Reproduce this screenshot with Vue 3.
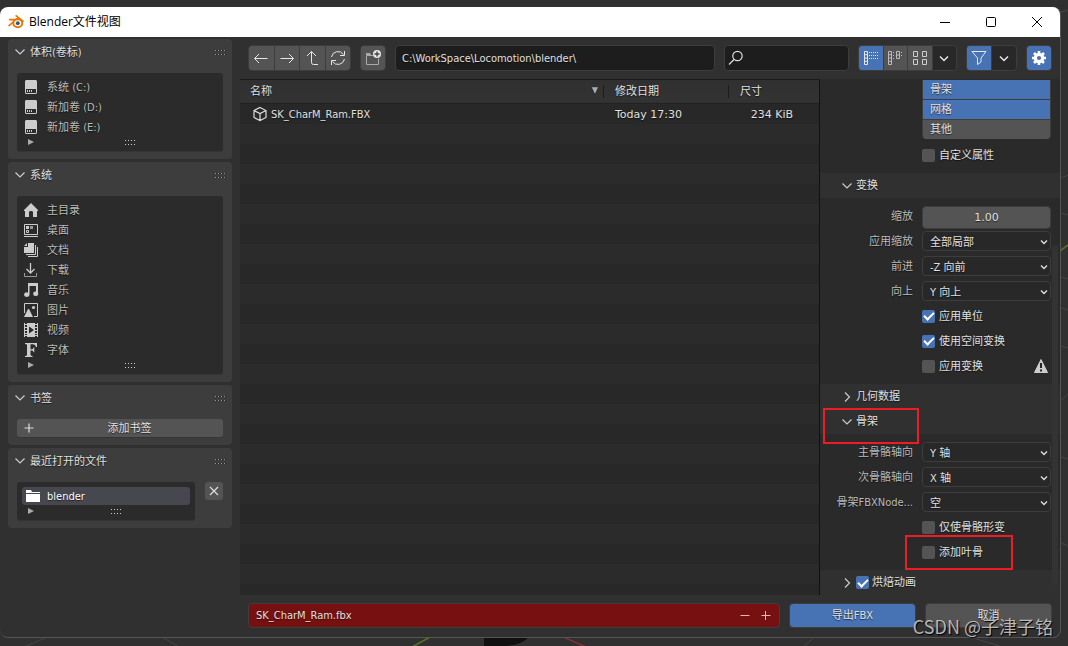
<script setup>
import { ref } from 'vue'

const volumes = ['系统 (C:)', '新加卷 (D:)', '新加卷 (E:)']
const places = [
  { icon: 'home', label: '主目录' },
  { icon: 'desktop', label: '桌面' },
  { icon: 'docs', label: '文档' },
  { icon: 'download', label: '下载' },
  { icon: 'music', label: '音乐' },
  { icon: 'image', label: '图片' },
  { icon: 'video', label: '视频' },
  { icon: 'font', label: '字体' },
]
const types = [
  { label: '骨架', on: true },
  { label: '网格', on: true },
  { label: '其他', on: false },
]
const transformSelects = [
  { id: 'apply-scale', label: '应用缩放', value: '全部局部' },
  { id: 'forward', label: '前进', value: '-Z 向前' },
  { id: 'up', label: '向上', value: 'Y 向上' },
]
const armatureSelects = [
  { id: 'primary-bone', label: '主骨骼轴向', value: 'Y 轴' },
  { id: 'secondary-bone', label: '次骨骼轴向', value: 'X 轴' },
  { id: 'node-type', label: '骨架FBXNode...', value: '空' },
]
const customProps = ref(false)
const applyUnit = ref(true)
const spaceTransform = ref(true)
const applyTransform = ref(false)
const deformOnly = ref(false)
const leafBones = ref(false)
const bake = ref(true)
const path = ref('C:\\WorkSpace\\Locomotion\\blender\\')
const search = ref('')
const scale = ref('1.00')
const filename = ref('SK_CharM_Ram.fbx')
</script>

<template>
  <div class="desktop">
    <svg class="viewport" viewBox="0 0 1068 646" preserveAspectRatio="none" aria-hidden="true">
      <g fill="none" stroke="#444" stroke-width="1">
        <path d="M26 646 50 636M160 636 178 646M804 646 816 636M966 636 1000 646M1061 12 1068 10M1061 178 1068 175M1061 213 1068 215M1061 277 1068 279M1061 308 1068 310M1061 346 1068 348M1061 400 1068 394M1061 457 1068 459M1061 543 1068 546" />
      </g>
      <path d="M412 647 432 636M1060 251 1068 245" stroke="#55722a" stroke-width="1.6" />
      <path d="M561 636 586 647" stroke="#7d3039" stroke-width="1.6" />
      <path d="M484 636H530Q522 645 506 646H484Z" fill="#101010" />
    </svg>

    <main class="window">
      <header class="titlebar">
        <svg class="logo" width="16" height="14" viewBox="0 0 16 14" aria-hidden="true">
          <path d="M8.2.8 15 6.2M1.6 4.6H9M1 10.6 9.6 3.4" stroke="#ea7600" stroke-width="1.6" stroke-linecap="round" fill="none" />
          <ellipse cx="9.8" cy="8.3" rx="4.5" ry="4" fill="#fff" stroke="#ea7600" stroke-width="1.9" />
          <circle cx="9.8" cy="8.2" r="1.9" fill="#265787" />
        </svg>
        <h1>Blender文件视图</h1>
        <div class="caption">
          <button aria-label="最小化"><svg width="12" height="12" viewBox="0 0 12 12"><path d="M1 6.5H11" /></svg></button>
          <button aria-label="最大化"><svg width="12" height="12" viewBox="0 0 12 12"><rect x="1.5" y="1.5" width="9" height="9" rx="1" /></svg></button>
          <button aria-label="关闭"><svg width="12" height="12" viewBox="0 0 12 12"><path d="M1 1 11 11M11 1 1 11" /></svg></button>
        </div>
      </header>

      <div class="body">
        <aside class="sidebar">
          <section class="panel">
            <h2><svg class="chev" width="12" height="12" viewBox="0 0 12 12"><path d="M1.5 3.5 6 8 10.5 3.5" /></svg>体积(卷标)<i class="grip dark"></i></h2>
            <div class="box">
              <button v-for="v in volumes" :key="v" class="place">
                <svg width="16" height="16" viewBox="0 0 16 16"><path fill="#ccc" fill-rule="evenodd" d="M3 1H13L14 2V14L13 15H3L2 14V2ZM3 10V14H13V10ZM4 11H5V13H4ZM6 11H7V13H6ZM8 11H9V13H8Z" /></svg>
                {{ v }}
              </button>
              <div class="boxfoot"><span class="tri"></span><i class="grip"></i></div>
            </div>
          </section>

          <section class="panel">
            <h2><svg class="chev" width="12" height="12" viewBox="0 0 12 12"><path d="M1.5 3.5 6 8 10.5 3.5" /></svg>系统<i class="grip dark"></i></h2>
            <div class="box">
              <button v-for="p in places" :key="p.label" class="place">
                <svg width="16" height="16" viewBox="0 0 16 16">
                  <path v-if="p.icon === 'home'" fill="#ccc" d="M8 1 15 8V9H14V15H10V10Q10 9 8 9T6 10V15H2V9H1V8Z" />
                  <g v-else-if="p.icon === 'desktop'"><path fill="none" stroke="#ccc" d="M1.5 2.5H14.5V12.5H1.5ZM1 14.5H15M3.500 8.500H5.500V10.500H3.500Z" /><path fill="#ccc" d="M3 4H6V7H3Z" /><path fill="#999" d="M7 4H10V7H7Z" /></g>
                  <g v-else-if="p.icon === 'docs'"><path fill="#ccc" d="M5 1H11V11H1V5H5ZM4 1V4H1Z" /><path fill="none" stroke="#ccc" d="M12.500 3V12.500H3M14.500 5V14.500H5" /></g>
                  <g v-else-if="p.icon === 'download'" fill="none"><path stroke="#ccc" stroke-width="1.3" d="M7.500 1V11M3.500 7 7.500 11 11.500 7" /><path stroke="#999" d="M1.500 11V14.500H13.500V11" /></g>
                  <path v-else-if="p.icon === 'music'" fill="#ccc" d="M5 1H15V11A2.500 2.200 0 1 1 13 9.600V4H6.500V12.500A2.700 2.200 0 1 1 5 10.700Z" />
                  <g v-else-if="p.icon === 'image'"><path fill="none" stroke="#ccc" d="M1.500 11V1.500H14.500V14.500H11" /><path fill="#ccc" d="M1 15 5 7H6L10 15Z" /><circle cx="10.500" cy="5.500" r="1.600" fill="#ccc" /></g>
                  <path v-else-if="p.icon === 'video'" fill="#ccc" fill-rule="evenodd" d="M1 1H2V2H4V1H12V2H14V1H15V15H14V14H12V15H4V14H2V15H1ZM2 3V5H4V3ZM2 6V8H4V6ZM2 9V11H4V9ZM2 12V13H4V12ZM12 3V5H14V3ZM12 6V8H14V6ZM12 9V11H14V9ZM12 12V13H14V12ZM6 4.500V11.500L11 8Z" />
                  <path v-else fill="#ccc" d="M2 1H14V5H13Q12.500 2.300 10 2.300H7.500V7.300H9Q10.500 7 10.500 5.500H11.300V10.300H10.500Q10.500 8.700 9 8.500H7.500V13Q7.600 14 9.500 14V15H2V14Q4 14 4 13V3Q4 2 2 2Z" />
                </svg>
                {{ p.label }}
              </button>
              <div class="boxfoot"><span class="tri"></span><i class="grip"></i></div>
            </div>
          </section>

          <section class="panel">
            <h2><svg class="chev" width="12" height="12" viewBox="0 0 12 12"><path d="M1.5 3.5 6 8 10.5 3.5" /></svg>书签<i class="grip dark"></i></h2>
            <button class="add">
              <svg width="10" height="10" viewBox="0 0 10 10"><path d="M5 .5V9.500M.5 5H9.500" stroke="#ddd" stroke-width="1.200" /></svg>
              <span>添加书签</span>
            </button>
          </section>

          <section class="panel">
            <h2><svg class="chev" width="12" height="12" viewBox="0 0 12 12"><path d="M1.5 3.5 6 8 10.5 3.5" /></svg>最近打开的文件<i class="grip dark"></i></h2>
            <div class="recent">
              <div class="box">
                <button class="place active">
                  <svg width="16" height="16" viewBox="0 0 16 16"><path fill="#fff" d="M1 2H6L7 4H15V5H1ZM1 6H15V14H1Z" /></svg>
                  blender
                </button>
                <div class="boxfoot"><span class="tri"></span><i class="grip"></i></div>
              </div>
              <button class="clear" aria-label="清除"><svg width="10" height="10" viewBox="0 0 10 10"><path d="M1 1 9 9M9 1 1 9" stroke="#ddd" stroke-width="1.200" /></svg></button>
            </div>
          </section>
        </aside>

        <div class="work">
          <nav class="toolbar">
            <div class="group nav">
              <button aria-label="后退"><svg width="16" height="16" viewBox="0 0 16 16"><path d="M14.500 8.500H1.500M6 4 1.500 8.500 6 13" /></svg></button>
              <button aria-label="前进"><svg width="16" height="16" viewBox="0 0 16 16"><path d="M1.500 8.500H14.500M10 4 14.500 8.500 10 13" /></svg></button>
              <button aria-label="上级"><svg width="16" height="16" viewBox="0 0 16 16"><path d="M3 6 7.500 1.500 12 6M7.500 1.500V12.500Q7.500 14.500 9.500 14.500H14" /></svg></button>
              <button aria-label="刷新"><svg width="16" height="16" viewBox="0 0 16 16"><path d="M1.500 7A6.600 6.600 0 0 1 13.500 4.500M14.500 1V5.500H10M14.500 9A6.600 6.600 0 0 1 2.500 11.500M1.500 15V10.500H6" /></svg></button>
            </div>
            <div class="group single">
              <button aria-label="新建文件夹"><svg width="16" height="16" viewBox="0 0 16 16"><path d="M1.500 14.500V5.500H8M1.500 14.500H13.500V8.500" stroke="#aaa" /><path d="M1 3H5L6 5H1Z" fill="#aaa" stroke="none" /><circle cx="12" cy="4" r="4" fill="#e6e6e6" stroke="none" /><path d="M12 1.500V6.500M9.500 4H14.500" stroke="#444" stroke-width="1.400" /></svg></button>
            </div>
            <input v-model="path" class="field path" aria-label="路径" />
            <label class="field search">
              <svg width="16" height="16" viewBox="0 0 16 16"><circle cx="9.500" cy="6" r="4.700" /><path d="M6 9.500 1 14.500" /></svg>
              <input v-model="search" aria-label="搜索" />
            </label>
            <div class="group four">
              <button class="on" aria-label="垂直列表"><svg width="16" height="16" viewBox="0 0 16 16"><path d="M1.500 1.500H4.500V14.500H1.500ZM1.500 4.700H4.500M1.500 8H4.500M1.500 11.300H4.500" /><path stroke-dasharray="1 1" d="M6 2.500H16M6 5.500H16M6 8.500H16" /></svg></button>
              <button aria-label="水平列表"><svg width="16" height="16" viewBox="0 0 16 16"><path stroke="#bbb" d="M1.500 1.500H4.500V14.500H1.500ZM1.500 4.700H4.500M1.500 8H4.500M1.500 11.300H4.500M9.500 1.500H12.500V8.500H9.500ZM9.500 5H12.500" /><path stroke="#bbb" stroke-dasharray="1 1" d="M6 2.500H8M6 5.500H8M6 8.500H8M14 2.500H16M14 5.500H16" /></svg></button>
              <button aria-label="缩略图"><svg width="16" height="16" viewBox="0 0 16 16"><path stroke="#ccc" d="M1.500 1.500H5.500V6.500H1.500ZM10.500 1.500H14.500V6.500H10.500ZM1.500 9.500H5.500V14.500H1.500ZM10.500 9.500H14.500V14.500H10.500Z" /></svg></button>
              <button class="drop" aria-label="显示设置"><svg width="10" height="10" viewBox="0 0 10 10"><path d="M1 3.500 5 7.500 9 3.500" stroke-width="1.500" /></svg></button>
            </div>
            <div class="group two">
              <button class="on" aria-label="过滤"><svg width="16" height="16" viewBox="0 0 16 16"><path d="M1 1.500H15L10 8V12L6.500 14.500V8Z" /></svg></button>
              <button class="drop" aria-label="过滤设置"><svg width="10" height="10" viewBox="0 0 10 10"><path d="M1 3.500 5 7.500 9 3.500" stroke-width="1.500" /></svg></button>
            </div>
            <div class="group single">
              <button class="on" aria-label="选项"><svg width="16" height="16" viewBox="0 0 16 16"><circle cx="8" cy="8" r="3.700" stroke="#fff" stroke-width="3.200" /><path d="M8 1V4M8 12V15M1 8H4M12 8H15M3 3 5 5M11 11 13 13M13 3 11 5M5 11 3 13" stroke="#fff" stroke-width="2.600" /></svg></button>
            </div>
          </nav>

          <div class="content">
            <div class="files">
              <table>
                <thead>
                  <tr><th class="name">名称<span class="sort">▼</span></th><th class="date">修改日期</th><th class="size">尺寸</th></tr>
                </thead>
                <tbody>
                  <tr>
                    <td class="name"><svg width="16" height="16" viewBox="0 0 16 16"><path fill="none" stroke="#ddd" stroke-width="1.200" d="M8 1.500 14 4.500V11.500L8 14.500 2 11.500V4.500ZM2 4.500 8 7.500 14 4.500M8 7.500V14.500" /></svg>SK_CharM_Ram.FBX</td>
                    <td class="date">Today 17:30</td>
                    <td class="size">234 KiB</td>
                  </tr>
                </tbody>
              </table>
            </div>

            <form class="options" @submit.prevent>
              <div class="group-top">
                <div class="types">
                  <button v-for="t in types" :key="t.label" type="button" :class="{ on: t.on }" :aria-pressed="t.on">{{ t.label }}</button>
                </div>
                <label class="check"><input v-model="customProps" type="checkbox" />自定义属性</label>
              </div>

              <h3><svg class="chev" width="12" height="12" viewBox="0 0 12 12"><path d="M1.5 3.5 6 8 10.5 3.5" /></svg>变换</h3>
              <div class="fields">
                <div class="row"><label for="scale">缩放</label><input id="scale" v-model="scale" class="number" /></div>
                <div v-for="s in transformSelects" :key="s.id" class="row">
                  <label :for="s.id">{{ s.label }}</label>
                  <div class="select"><select :id="s.id"><option>{{ s.value }}</option></select><svg width="8" height="8" viewBox="0 0 8 8"><path d="M1 2.500 4 5.500 7 2.500" /></svg></div>
                </div>
                <label class="check"><input v-model="applyUnit" type="checkbox" />应用单位</label>
                <label class="check"><input v-model="spaceTransform" type="checkbox" />使用空间变换</label>
                <div class="warnrow">
                  <label class="check"><input v-model="applyTransform" type="checkbox" />应用变换</label>
                  <svg width="16" height="16" viewBox="0 0 16 16" role="img" aria-label="警告"><path fill="#ccc" stroke="#ccc" stroke-linejoin="round" d="M8 1.500 14.500 14.500H1.500Z" /><path d="M8 5V10M8 11.500V13.500" stroke="#222" stroke-width="2" /></svg>
                </div>
              </div>

              <h3><svg class="chev" width="12" height="12" viewBox="0 0 12 12"><path d="M4 1.500 8.500 6 4 10.500" /></svg>几何数据</h3>
              <h3><svg class="chev" width="12" height="12" viewBox="0 0 12 12"><path d="M1.5 3.5 6 8 10.5 3.5" /></svg>骨架<i class="mark wide"></i></h3>
              <div class="fields">
                <div v-for="s in armatureSelects" :key="s.id" class="row">
                  <label :for="s.id">{{ s.label }}</label>
                  <div class="select"><select :id="s.id"><option>{{ s.value }}</option></select><svg width="8" height="8" viewBox="0 0 8 8"><path d="M1 2.500 4 5.500 7 2.500" /></svg></div>
                </div>
                <label class="check"><input v-model="deformOnly" type="checkbox" />仅使骨骼形变</label>
                <label class="check"><input v-model="leafBones" type="checkbox" />添加叶骨<i class="mark leaf"></i></label>
              </div>
              <h3><svg class="chev" width="12" height="12" viewBox="0 0 12 12"><path d="M4 1.500 8.500 6 4 10.500" /></svg><label class="check inline"><input v-model="bake" type="checkbox" />烘焙动画</label></h3>
              <i class="thumb"></i>
            </form>
          </div>

          <footer class="footer">
            <div class="filename">
              <input v-model="filename" aria-label="文件名" />
              <button aria-label="减少"><svg width="10" height="10" viewBox="0 0 10 10"><path d="M.5 4.500H9.500" stroke="#dbb" /></svg></button>
              <button aria-label="增加"><svg width="10" height="10" viewBox="0 0 10 10"><path d="M.5 4.500H9.500M4.500 0V9" stroke="#dbb" /></svg></button>
            </div>
            <button class="primary">导出FBX</button>
            <button>取消</button>
          </footer>
        </div>
      </div>
    </main>
    <p class="watermark">CSDN @子津子铭</p>
  </div>
</template>

<style>
body { margin: 0; }
</style>

<style scoped>
* { box-sizing: border-box; }
.desktop {
  position: relative;
  display: flex;
  min-height: 100vh;
  padding: 7px 7px 8px 0;
  background: #303030;
  font: 11px/21px "DejaVu Sans Condensed", "Noto Sans CJK SC", sans-serif;
  color: #e0e0e0;
  overflow: hidden;
}
.viewport { position: absolute; inset: 0; width: 100%; height: 100%; }
button, input, select { font: inherit; color: inherit; border: 0; padding: 0; margin: 0; text-shadow: inherit; }
button { display: flex; align-items: center; justify-content: center; cursor: pointer; }
svg { flex: none; display: block; }
h1, h2, h3, p { margin: 0; font-weight: 400; font-size: inherit; }
.window {
  position: relative;
  flex: 1;
  display: flex;
  flex-direction: column;
  min-width: 0;
  border: solid #555;
  border-width: 0 1px 1px 0;
  border-radius: 8px;
  background: #303030;
  overflow: hidden;
}
.titlebar { display: flex; align-items: center; height: 30px; padding-left: 8px; background: #fff; color: #000; }
.titlebar h1 { flex: 1; margin-left: 5px; font: 12px/20px "Open Sans", "Noto Sans CJK SC", sans-serif; }
.caption { display: flex; }
.caption button { width: 46px; height: 30px; background: none; }
.caption svg { fill: none; stroke: #000; }
.body { flex: 1; display: flex; min-height: 0; text-shadow: 0 1px 1px rgba(0, 0, 0, .6); }

.sidebar { width: 240px; flex: none; padding: 2px 8px; display: flex; flex-direction: column; gap: 3px; }
.panel { padding: 0 9px 8px; border-radius: 4px; background: #3d3d3d; }
.panel h2 { display: flex; align-items: center; height: 26px; margin: 0 -3px 8px; gap: 4px; }
.chev { fill: none; stroke: #ccc; stroke-width: 1.200; }
.grip {
  width: 11px;
  height: 5px;
  background: repeating-linear-gradient(90deg, #ccc 0 1px, transparent 1px 3px);
  -webkit-mask: linear-gradient(#000 0 1px, transparent 1px 4px, #000 4px 5px);
  mask: linear-gradient(#000 0 1px, transparent 1px 4px, #000 4px 5px);
}
.grip.dark { margin-left: auto; background: repeating-linear-gradient(90deg, #999 0 1px, #222 1px 2px, transparent 2px 3px); }
.box { padding: 4px 5px; border-radius: 3px; background: #2b2b2b; box-shadow: 0 1px #353535; }
.place { width: 100%; height: 20px; justify-content: flex-start; gap: 8px; background: none; color: #bbb; }
.place svg { margin-left: 1px; }
.place.active { height: 18px; margin-top: 1px; margin-bottom: 1px; padding-left: 2px; border-radius: 3px; background: #47474f; color: #fff; }
.box .place.active { gap: 6px; }
.boxfoot { position: relative; display: flex; align-items: center; justify-content: center; height: 10px; padding-left: 20px; }
.boxfoot .grip { margin-left: 0; }
.tri { position: absolute; left: 6px; top: 2px; border: solid transparent; border-width: 3px 0 3px 6px; border-left-color: #aaa; }
.add { position: relative; width: 100%; height: 18px; border-radius: 3px; background: #545454; box-shadow: 0 1px #353535; }
.add svg { position: absolute; left: 7px; }
.add span { padding-left: 19px; }
.recent { display: flex; align-items: flex-start; gap: 10px; }
.recent .box { flex: 1; }
.clear { width: 18px; height: 18px; border-radius: 3px; background: #545454; }

.work { flex: 1; min-width: 0; display: flex; flex-direction: column; }
.toolbar { display: flex; gap: 9px; height: 42px; padding: 8px 8px 8px 8px; }
.group { display: flex; gap: 1px; border: 1px solid #3d3d3d; border-radius: 4px; background: #3d3d3d; overflow: hidden; flex: none; }
.group button { flex: 1; background: #545454; }
.group svg { fill: none; stroke: #e6e6e6; }
.group .on { background: #4772b3; }
.group .drop { background: #282828; }
.nav { width: 103px; }
.single { width: 26px; }
.four { width: 99px; }
.two { width: 51px; }
.field { min-width: 0; border: 1px solid #3d3d3d; border-radius: 4px; background: #1d1d1d; }
.path { flex: 1; padding: 0 6px; }
.search { display: flex; align-items: center; width: 125px; padding-left: 3px; }
.search svg { fill: none; stroke: #ddd; stroke-width: 1.200; }
.search input { flex: 1; min-width: 0; background: none; }

.content { flex: 1; display: flex; min-height: 0; }
.files {
  flex: 1;
  border-top: 1px solid #1c1c1c;
  border-right: 1px solid #111;
  background: repeating-linear-gradient(#282828 0 20px, #2b2b2b 20px 40px) 0 24px;
}
table { width: 100%; border-collapse: collapse; table-layout: fixed; }
th, td { padding: 0 0 0 12px; text-align: left; font-weight: 400; }
thead tr { height: 23px; background: linear-gradient(#303030, #333); border-bottom: 1px solid #222; }
th + th { background: linear-gradient(#1c1c1c, #1c1c1c) 0 50% / 1px 13px no-repeat; }
.name { position: relative; }
th.name { padding-left: 10px; }
.sort { position: absolute; right: 5px; top: 0; font-size: 9px; color: #aaa; }
.date { width: 125px; }
.size { width: 91px; }
td.size { text-align: right; padding-right: 26px; }
td { height: 21px; }
td.name { display: flex; align-items: center; gap: 3px; padding-left: 12px; }
td.date, td.size, .number { font-family: "DejaVu Sans", sans-serif; }

.options { position: relative; width: 240px; flex: none; background: #2a2a2a; }
.group-top { padding: 1px 9px 8px 102px; }
.types { display: flex; flex-direction: column; gap: 1px; margin-bottom: 6px; border: solid #3d3d3d; border-width: 0 1px; border-radius: 0 0 4px 4px; background: #3d3d3d; overflow: hidden; }
.types button { height: 19px; padding-left: 7px; justify-content: flex-start; background: #545454; }
.types .on { background: #4772b3; }
.check { position: relative; display: flex; align-items: center; gap: 4px; height: 20px; }
.check input {
  appearance: none;
  width: 13px;
  height: 13px;
  border-radius: 2px;
  background: #545454;
  display: grid;
  place-items: center;
}
.check input:checked { background: #4772b3; }
.check input:checked::after { content: ""; width: 4px; height: 8px; margin-bottom: 2px; border: solid #fff; border-width: 0 2px 2px 0; transform: rotate(45deg); }
.check.inline { gap: 3px; }
h3 { position: relative; display: flex; align-items: center; gap: 3px; height: 25px; padding-left: 21px; background: #303030; }
.fields { display: flex; flex-direction: column; gap: 5px; padding: 8px 9px; }
.fields > .check, .warnrow { margin-left: 93px; }
.row { display: grid; grid-template-columns: 84px 1fr; gap: 9px; height: 20px; }
.row label { text-align: right; color: #bbb; white-space: nowrap; }
.number { min-width: 0; border: 1px solid #3d3d3d; border-radius: 4px; background: #545454; text-align: center; }
.select { position: relative; }
.select select { appearance: none; width: 100%; height: 20px; padding-left: 7px; border: 1px solid #3d3d3d; border-radius: 4px; background: #282828; }
.select svg { position: absolute; right: 3px; top: 7px; fill: none; stroke: #ddd; stroke-width: 1.400; pointer-events: none; }
.warnrow { display: flex; align-items: center; justify-content: space-between; }
.warnrow svg { margin-right: 2px; }
.mark { position: absolute; z-index: 2; border: 2px solid #ee1c24; pointer-events: none; }
.mark.wide { left: 3px; top: -1px; width: 96px; height: 36px; }
.mark.leaf { left: -17px; top: -7px; width: 108px; height: 35px; }
.thumb { position: absolute; right: 2px; top: 166px; bottom: 9px; width: 6px; border-radius: 3px; background: #333; }

.footer { display: grid; grid-template-columns: 1fr 127px 127px; gap: 9px; padding: 8px 8px 9px 8px; }
.footer > * { height: 25px; border: 1px solid #3d3d3d; border-radius: 4px; background: #545454; }
.footer > .primary { background: #4772b3; }
.footer > .filename { display: flex; align-items: center; padding: 0 3px 0 7px; background: #771111; }
.filename input { flex: 1; min-width: 0; background: none; }
.filename button { width: 21px; height: 20px; background: none; }
.watermark { position: absolute; right: 15px; bottom: 8px; font: 18px/24px "Noto Sans CJK SC", sans-serif; color: rgba(210, 210, 210, .85); text-shadow: 1px 1px 1px #000; }
</style>
